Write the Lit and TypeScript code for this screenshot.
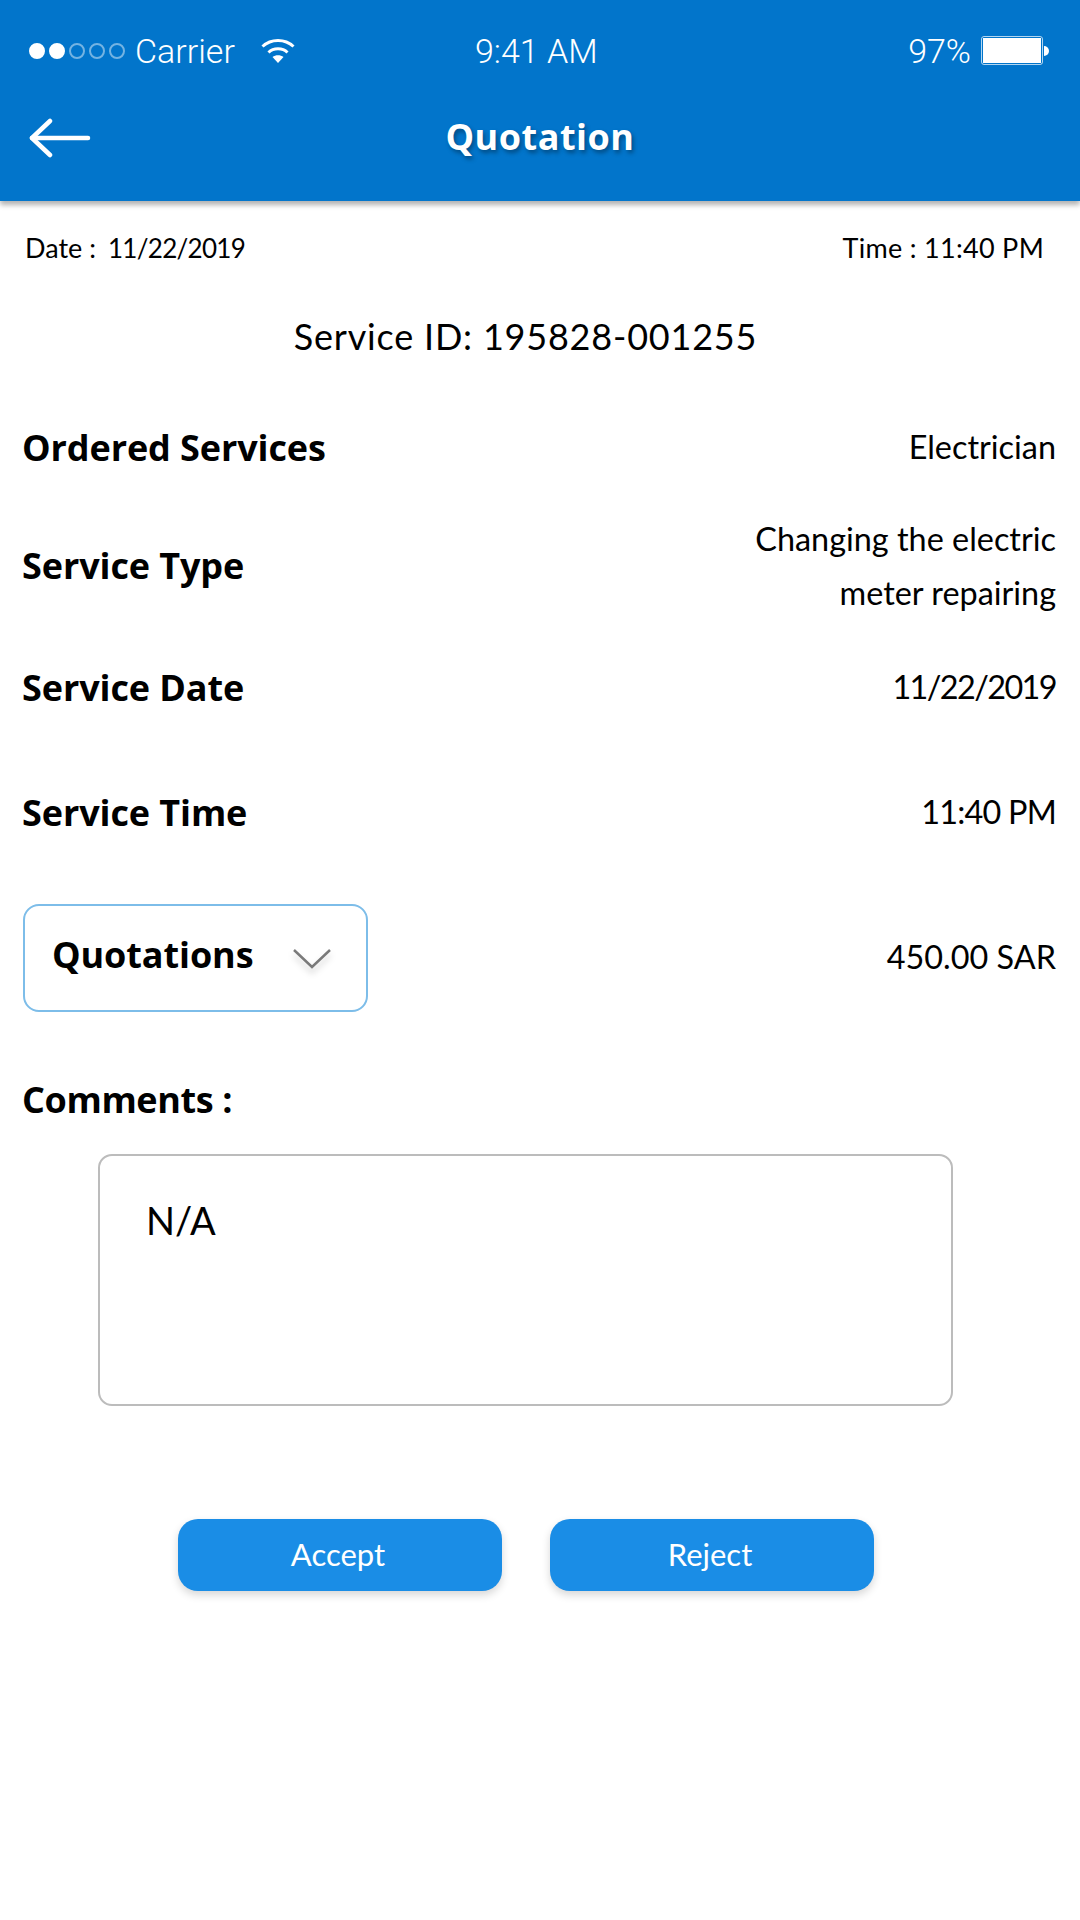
import { css, html, LitElement } from "lit";
import { customElement } from "lit/decorators.js";

@customElement("app-root")
class AppRoot extends LitElement {
  renderRow(label: string, value: unknown, cls: string) {
    return html`<div class="row ${cls}">
      <span class="label">${label}</span>
      <span class="value">${value}</span>
    </div>`;
  }

  render() {
    return html`
      <header>
        <div class="status">
          <div class="signal">
            <i class="on"></i><i class="on"></i><i></i><i></i><i></i>
          </div>
          <span class="carrier">Carrier</span>
          <svg class="wifi" width="36" height="28" viewBox="0 0 36 28" fill="none" stroke="#fff" stroke-width="3">
            <path d="M2.5 9.5C11 1.5 25 1.5 33.5 9.5" />
            <path d="M8.5 15.5C13.5 10.5 22.5 10.5 27.5 15.5" />
            <path d="M18 26l-5.500-6c3-2.500 8-2.500 11 0z" fill="#fff" stroke="none" />
          </svg>
          <span class="clock">9:41 AM</span>
          <span class="percent">97%</span>
          <div class="battery"><div class="cell"></div></div>
          <div class="nub"></div>
        </div>
        <div class="nav">
          <svg class="back" width="62" height="40" viewBox="0 0 62 40" fill="none" stroke="#fff" stroke-width="4.500" stroke-linecap="round" stroke-linejoin="round">
            <path d="M59 20H3" />
            <path d="M21 3L3 20l18 17" />
          </svg>
          <h1>Quotation</h1>
        </div>
      </header>
      <main>
        <div class="stamp">
          <span class="date">Date :<span class="num">11/22/2019</span></span>
          <span class="time">Time : 11:40 PM</span>
        </div>
        <div class="service-id">Service ID: 195828-001255</div>
        ${this.renderRow("Ordered Services", "Electrician", "r-ordered")}
        ${this.renderRow("Service Type", html`Changing the electric<br />meter repairing`, "r-type")}
        ${this.renderRow("Service Date", "11/22/2019", "r-date")}
        ${this.renderRow("Service Time", "11:40 PM", "r-time")}
        <div class="row r-quote">
          <div class="select">
            <span class="label">Quotations</span>
            <svg class="chevron" width="40" height="28" viewBox="0 0 40 28" fill="none" stroke="#7a7a7a" stroke-width="2.500">
              <path d="M2 3l18 17L38 3" />
            </svg>
          </div>
          <span class="value">450.00 SAR</span>
        </div>
        <div class="label comments">Comments :</div>
        <div class="comment-box">N/A</div>
        <div class="actions">
          <button>Accept</button>
          <button>Reject</button>
        </div>
      </main>
    `;
  }

  static styles = css`
    :host {
      display: block;
      width: 1080px;
      height: 1920px;
      background: #fff;
      color: #000;
      overflow: hidden;
      font-family: "Lato", sans-serif;
    }
    header {
      height: 201px;
      background: #0275cb;
      box-shadow: 0 4px 5px rgba(0, 0, 0, 0.3);
      color: #fff;
    }
    .status {
      height: 101px;
      display: flex;
      align-items: center;
      padding: 0 31px 0 29px;
      font-family: "Roboto", sans-serif;
      font-weight: 300;
      font-size: 34px;
    }
    .signal {
      display: flex;
      gap: 4px;
      margin-right: 10px;
    }
    .signal i {
      width: 16px;
      height: 16px;
      box-sizing: border-box;
      border: 2px solid rgba(255, 255, 255, 0.45);
      border-radius: 50%;
    }
    .signal i.on {
      background: #fff;
      border-color: #fff;
    }
    .wifi {
      margin-left: 25px;
    }
    .clock {
      margin-left: 179px;
    }
    .percent {
      margin-left: auto;
      margin-right: 10px;
    }
    .battery {
      width: 62px;
      height: 29px;
      border: 1px solid rgba(255, 255, 255, 0.7);
      border-radius: 3px;
      padding: 1px;
      box-sizing: border-box;
    }
    .cell {
      height: 100%;
      background: #fff;
    }
    .nub {
      width: 5px;
      height: 10px;
      background: #fff;
      border-radius: 0 5px 5px 0;
      margin-left: 1px;
    }
    .nav {
      height: 70px;
      display: flex;
      align-items: center;
      justify-content: center;
      position: relative;
    }
    .back {
      position: absolute;
      left: 29px;
      top: 17px;
    }
    h1 {
      margin: 0;
      font: 700 36px "Open Sans", sans-serif;
      letter-spacing: 0.5px;
      text-shadow: 2px 3px 4px rgba(0, 0, 0, 0.35);
    }
    main {
      padding: 0 24px 0 22px;
    }
    .stamp {
      display: flex;
      justify-content: space-between;
      padding: 30px 12px 0 3px;
      font-size: 27px;
      line-height: 34px;
    }
    .num {
      font-size: 26px;
      letter-spacing: -0.7px;
      margin-left: 12px;
    }
    .time {
      letter-spacing: 0.3px;
    }
    .service-id {
      text-align: center;
      font-size: 36px;
      line-height: 44px;
      letter-spacing: 0.8px;
      margin: 49px 27px 0 0;
    }
    .row {
      display: flex;
      justify-content: space-between;
      align-items: center;
    }
    .label {
      font: 700 36px "Open Sans", sans-serif;
      letter-spacing: -0.1px;
    }
    .value {
      font-size: 32.4px;
      line-height: 54px;
      text-align: right;
    }
    .r-ordered {
      margin-top: 59px;
      height: 60px;
    }
    .r-type {
      margin-top: 28px;
      height: 120px;
    }
    .r-type .value {
      margin-top: 2px;
    }
    .r-date {
      margin-top: 32px;
      height: 60px;
    }
    .r-date .value {
      letter-spacing: -1.6px;
    }
    .r-time {
      margin-top: 65px;
      height: 60px;
    }
    .r-time .value {
      letter-spacing: -0.8px;
    }
    .r-quote {
      margin-top: 62px;
      height: 108px;
    }
    .r-quote .value {
      margin-bottom: 2px;
    }
    .select {
      width: 345px;
      height: 108px;
      margin-left: 1px;
      box-sizing: border-box;
      border: 2.5px solid #7dbde9;
      border-radius: 16px;
      display: flex;
      align-items: center;
      padding: 0 34px 8px 27px;
      justify-content: space-between;
    }
    .chevron {
      filter: drop-shadow(0 5px 3px rgba(0, 0, 0, 0.18));
      margin-top: 14px;
    }
    .comments {
      margin-top: 63px;
      line-height: 50px;
      letter-spacing: -0.4px;
    }
    .comment-box {
      width: 855px;
      height: 252px;
      box-sizing: border-box;
      margin: 29px 0 0 76px;
      border: 2.5px solid #bcbcbc;
      border-radius: 14px;
      padding: 39px 46px;
      font-size: 38px;
      line-height: 50px;
    }
    .actions {
      display: flex;
      gap: 48px;
      margin: 113px 0 0 156px;
    }
    button {
      width: 324px;
      height: 72px;
      border: 0;
      border-radius: 20px;
      padding: 0 4px 3px 0;
      background: #1a8de6;
      color: #fff;
      font: 400 31px "Lato", sans-serif;
      box-shadow: 0 4px 8px rgba(0, 0, 0, 0.16);
    }
  `;
}
